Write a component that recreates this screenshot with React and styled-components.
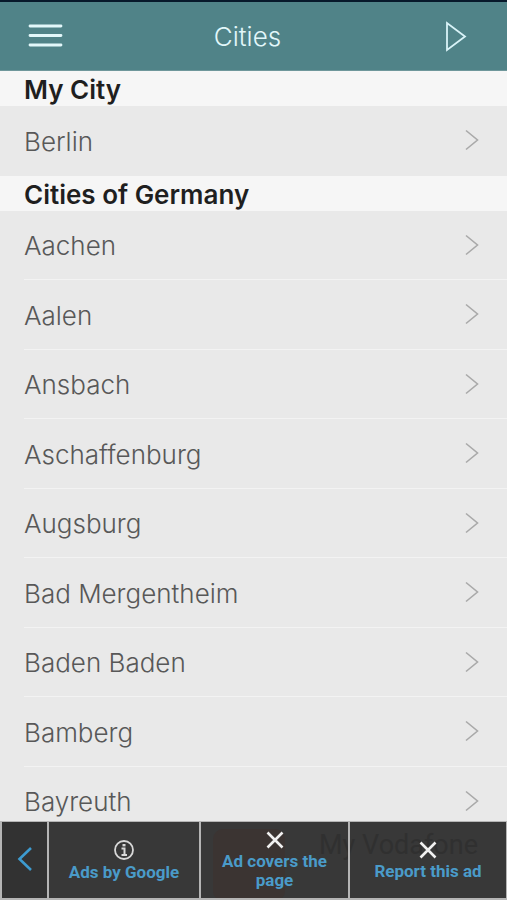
import React from 'react'
import styled, { createGlobalStyle, css } from 'styled-components'

const cities = [
    'Aachen',
    'Aalen',
    'Ansbach',
    'Aschaffenburg',
    'Augsburg',
    'Bad Mergentheim',
    'Baden Baden',
    'Bamberg',
    'Bayreuth',
];

const GlobalStyle = createGlobalStyle`
    * {
        box-sizing: border-box;
    }

    body {
        margin: 0;
        background: #e9e9e9;
        font-family: Inter, "Liberation Sans", sans-serif;
    }
`;

const Page = styled.div`
    display: flex;
    flex-direction: column;
    min-height: 100vh;
    padding-bottom: 64px;
`;

const Header = styled.header`
    display: grid;
    grid-template-columns: 1fr auto 1fr;
    align-items: center;
    height: 71px;
    padding: 0 40px 0 28px;
    border-top: 2px solid #07192b;
    border-bottom: 1px solid #6f979b;
    background: #508388;
    color: #e2f7fa;
`;

const Title = styled.h1`
    margin: 0;
    padding-top: 2px;
    font-size: 26px;
    font-weight: 300;
    line-height: 32px;
`;

const IconButton = styled.button`
    display: flex;
    justify-self: ${({ $side }) => $side};
    padding: 0;
    border: 0;
    background: none;
    color: inherit;
    cursor: pointer;
`;

const Main = styled.main`
    display: flex;
    flex: 1;
    flex-direction: column;
`;

const SectionTitle = styled.h2`
    margin: 0;
    padding: 2px 24px 0;
    background: #f6f6f6;
    color: #1f1f1f;
    font-size: 26px;
    font-weight: 600;
    line-height: 33px;
`;

const CityList = styled.ul`
    display: flex;
    flex: ${({ $rows }) => $rows} 0 auto;
    flex-direction: column;
    margin: 0;
    padding: 0;
    list-style: none;
`;

const CityItem = styled.li`
    display: flex;
    flex: 1 0 68px;
    padding-left: 24px;
`;

const CityLink = styled.a`
    display: flex;
    flex: 1;
    align-items: center;
    justify-content: space-between;
    padding-right: 28px;
    border-bottom: 1px solid #f3f3f3;
    color: #585858;
    text-decoration: none;

    ${CityItem}:last-child & {
        border-bottom-color: transparent;
    }
`;

const CityName = styled.span`
    padding-top: 3px;
    font-size: 26px;
    font-weight: 300;
    line-height: 32px;
`;

const AdBar = styled.aside`
    position: fixed;
    right: 0;
    bottom: 0;
    left: 0;
    display: grid;
    grid-template-columns: 46px 152fr 149fr 158fr;
    height: 79px;
    border: 1px solid #b5b5b5;
    border-bottom-width: 2px;
    background: #383838;
`;

// the banner that the ad controls cover
const Banner = styled.div`
    position: absolute;
    inset: 0;
    display: flex;
    align-items: flex-start;
    justify-content: flex-end;
    gap: 34px;
    padding: 7px 28px 0 0;
    overflow: hidden;
    color: #303030;
    font-family: Roboto, sans-serif;
    font-size: 27px;
    line-height: 32px;
`;

const BannerLogo = styled.span`
    width: 72px;
    height: 72px;
    border-radius: 10px;
    background: #3b3432;
`;

const adCell = css`
    position: relative;
    display: flex;
    flex-direction: column;
    align-items: center;
    justify-content: center;
    gap: 2px;
    padding: 0 16px;
    border: 0 solid #b5b5b5;
    border-left-width: ${({ $first }) => ($first ? 1 : 2)}px;
    background: ${({ $first }) => ($first ? '#323232' : 'transparent')};
    color: #4a9bc9;
    font-family: Roboto, sans-serif;
    font-size: 17px;
    font-weight: 700;
    line-height: 19px;
    text-align: center;
    text-decoration: none;
    cursor: pointer;
`;

const AdButton = styled.button`
    ${adCell}
`;

const AdLink = styled.a`
    ${adCell}
`;

const Chevron = () => (
    <svg width="14" height="22" viewBox="0 0 14 22" fill="none" stroke="#a9a9a9" strokeWidth="1.6" aria-hidden="true">
        <path d="M1 1.500L12.500 11L1 20.500" />
    </svg>
)

const Cross = () => (
    <svg width="20" height="20" viewBox="0 0 20 20" fill="none" stroke="#f0f0f0" strokeWidth="2.6" aria-hidden="true">
        <path d="M2.500 2.500L17.500 17.500M17.500 2.500L2.500 17.500" />
    </svg>
)

const Cities = ({ names }) => (
    <CityList $rows={names.length}>
        {names.map((name) => (
            <CityItem key={name}>
                <CityLink href="#">
                    <CityName>{name}</CityName>
                    <Chevron />
                </CityLink>
            </CityItem>
        ))}
    </CityList>
)

const App = () => {
    return (
        <>
            <GlobalStyle />
            <Page>
                <Header>
                    <IconButton $side="start" aria-label="Menu">
                        <svg width="36" height="26" viewBox="0 0 36 26" stroke="#e2f7fa" strokeWidth="2.8" strokeLinecap="round">
                            <path d="M2 3H33M2 12.500H33M2 22H33" />
                        </svg>
                    </IconButton>
                    <Title>Cities</Title>
                    <IconButton $side="end" aria-label="Play">
                        <svg width="22" height="32" viewBox="0 0 22 32" fill="none" stroke="#d9f3f8" strokeWidth="1.800">
                            <path d="M2 3V30L20 16.500Z" />
                        </svg>
                    </IconButton>
                </Header>
                <Main>
                    <SectionTitle>My City</SectionTitle>
                    <Cities names={['Berlin']} />
                    <SectionTitle>Cities of Germany</SectionTitle>
                    <Cities names={cities} />
                </Main>
            </Page>
            <AdBar>
                <Banner>
                    <BannerLogo />
                    My Vodafone
                </Banner>
                <AdButton $first aria-label="Back">
                    <svg width="16" height="26" viewBox="0 0 16 26" fill="none" stroke="#3d9bd0" strokeWidth="2.6">
                        <path d="M14 1L2.500 12L14 23" />
                    </svg>
                </AdButton>
                <AdLink href="#">
                    <svg width="22" height="22" viewBox="0 0 22 22" fill="none" stroke="#d8d8d8" strokeWidth="1.800" aria-hidden="true">
                        <circle cx="11" cy="11" r="9" />
                        <path d="M8.500 9.500H11.500V16M8.500 16H14" strokeWidth="2" />
                        <path d="M9.500 6.200H12.500" strokeWidth="2.4" />
                    </svg>
                    Ads by Google
                </AdLink>
                <AdButton>
                    <Cross />
                    Ad covers the page
                </AdButton>
                <AdButton>
                    <Cross />
                    Report this ad
                </AdButton>
            </AdBar>
        </>
    )
}

export default App
